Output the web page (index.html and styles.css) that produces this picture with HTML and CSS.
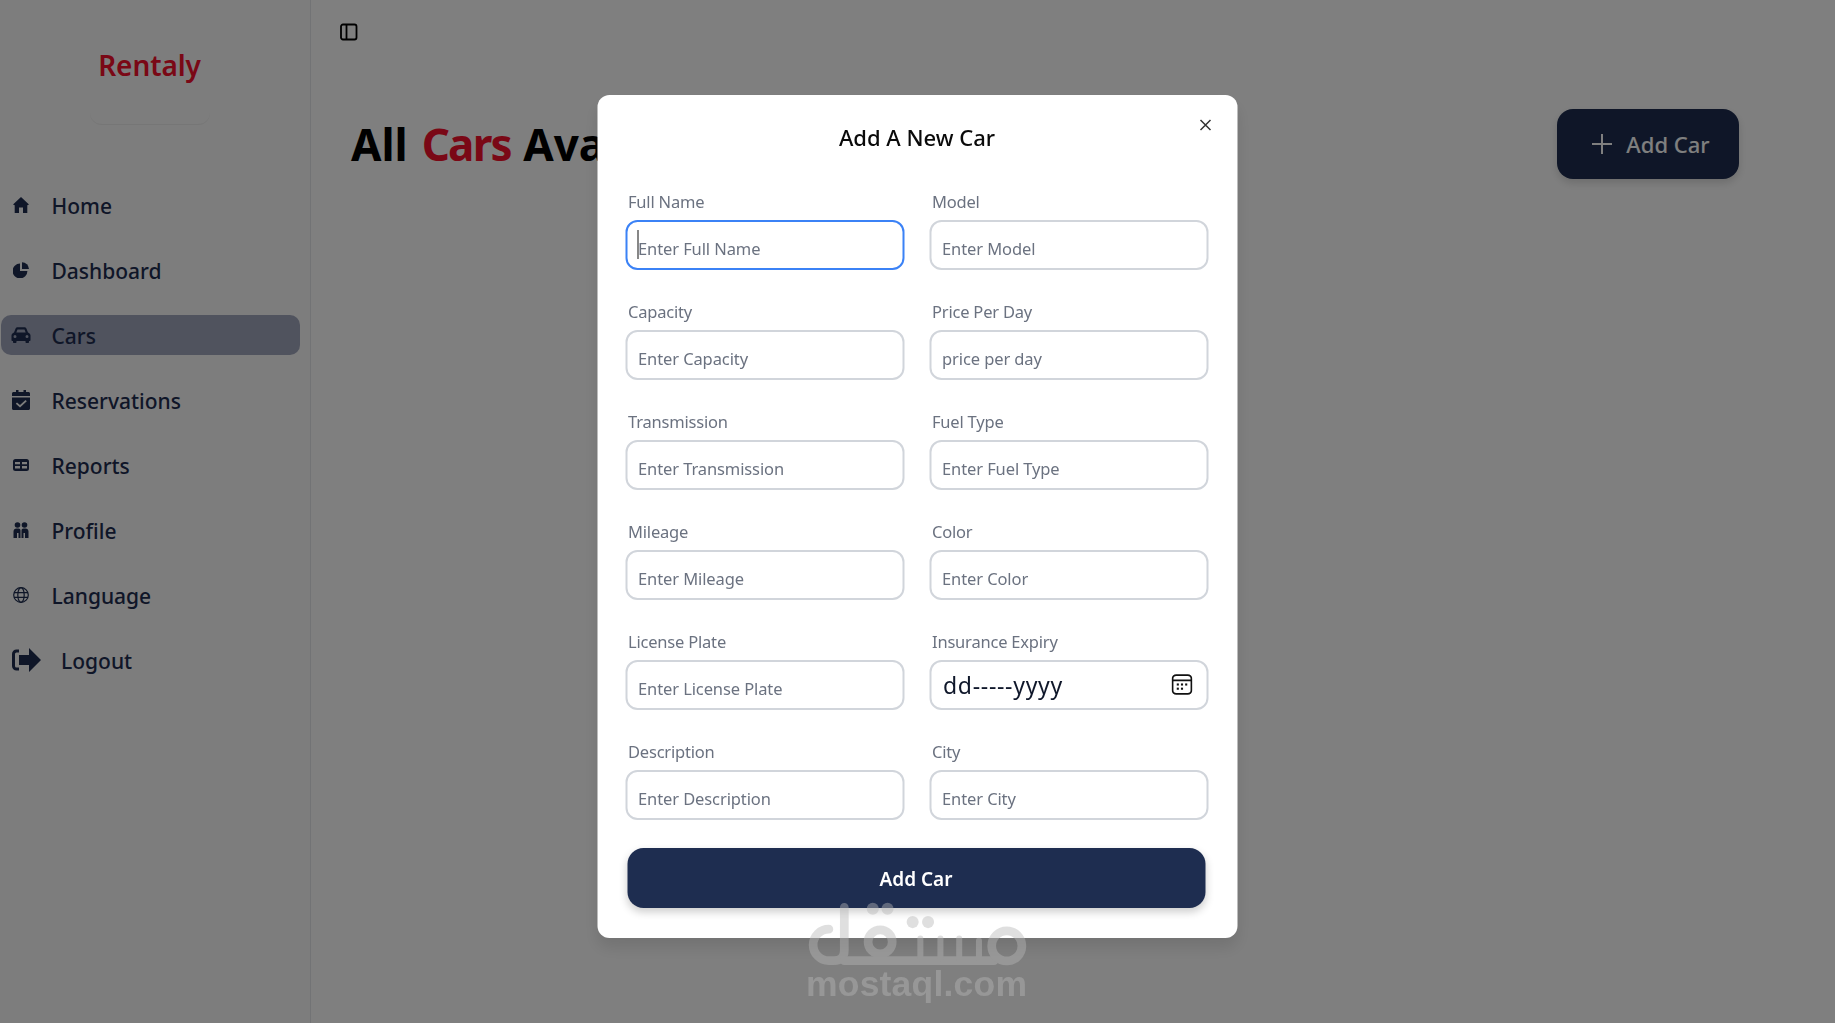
FILE: index.html
```html
<!DOCTYPE html>
<html lang="en">
<head>
<meta charset="utf-8">
<title>Rentaly - Cars</title>
<link rel="stylesheet" href="styles.css">
</head>
<body>
<div class="app">
  <aside class="sidebar">
    <div class="brand"><span class="brand-name">Rentaly</span></div>
    <nav class="nav">
      <a class="nav-item"><svg class="nav-icon" viewBox="0 0 16 16"><path d="M8 0 16 7.500 14.300 8.200V16H10V10.500H6V16H1.700V8.200L0 7.500Z"/></svg><span>Home</span></a>
      <a class="nav-item"><svg class="nav-icon" viewBox="0 0 16 16"><path d="M7 1.600V9H14.400A7.400 7.400 0 1 1 7 1.600Z"/><path d="M9 0.200A7 7 0 0 1 16 7H9Z"/></svg><span>Dashboard</span></a>
      <a class="nav-item active"><svg class="nav-icon car" viewBox="0 0 20 16"><path fill-rule="evenodd" d="M4.600 1.600C5 .7 5.800 .2 6.800 .2h6.400c1 0 1.800.5 2.200 1.400L17 5.500c1.400.5 2.500 1.500 2.500 3V13c0 .6-.4 1-1 1H18v1c0 .6-.4 1-1 1h-1.500c-.6 0-1-.4-1-1v-1h-9v1c0 .6-.4 1-1 1H3c-.6 0-1-.4-1-1v-1h-.5c-.6 0-1-.4-1-1V8.500c0-1.500 1.100-2.500 2.500-3ZM6.500 2.500 5.300 5.500h9.400l-1.200-3ZM4 8a1.500 1.500 0 1 0 0 3 1.500 1.500 0 0 0 0-3Zm12 0a1.500 1.500 0 1 0 0 3 1.500 1.500 0 0 0 0-3Z"/></svg><span>Cars</span></a>
      <a class="nav-item"><svg class="nav-icon tall" viewBox="0 0 18 20"><path fill-rule="evenodd" d="M4 0h2.500v2h5V0H14v2h2.500c.8 0 1.500.7 1.500 1.500V6H0V3.500C0 2.700.7 2 1.500 2H4ZM0 7.500h18v11c0 .8-.7 1.500-1.500 1.500h-15C.7 20 0 19.300 0 18.500ZM13.500 10 8 15 5 12.400 3.800 13.700 8 17.500 14.800 11.300Z"/></svg><span>Reservations</span></a>
      <a class="nav-item"><svg class="nav-icon" viewBox="0 0 16 16"><path fill-rule="evenodd" d="M2.500 2h11A2.500 2.500 0 0 1 16 4.500v7a2.500 2.500 0 0 1-2.500 2.500h-11A2.500 2.500 0 0 1 0 11.500v-7A2.500 2.500 0 0 1 2.500 2ZM2 5v2.200h5V5Zm7 0v2.200h5V5ZM2 9v2.500h5V9Zm7 0v2.500h5V9Z"/></svg><span>Reports</span></a>
      <a class="nav-item"><svg class="nav-icon" viewBox="0 0 16 16"><circle cx="4.500" cy="3" r="2.800"/><circle cx="11.500" cy="3" r="2.800"/><path d="M.5 16V9.500C.5 7.500 1.800 6.500 3.500 6.500H5.500C6.800 6.500 7.400 7.300 7.500 8.500V16H5.500V11H4V16ZM15.500 16V9.500C15.500 7.500 14.200 6.500 12.500 6.500H10.500C9.200 6.500 8.600 7.300 8.500 8.500V16H10.500V11H12V16Z"/></svg><span>Profile</span></a>
      <a class="nav-item"><svg class="nav-icon outline" viewBox="0 0 16 16"><circle cx="8" cy="8" r="7.300"/><ellipse cx="8" cy="8" rx="3.200" ry="7.300"/><path d="M1 5.700H15M1 10.300H15"/></svg><span>Language</span></a>
      <a class="nav-item logout"><svg class="logout-icon" viewBox="0 0 30 24"><path d="M8 3H5.500A3 3 0 0 0 2.500 6V18A3 3 0 0 0 5.500 21H8" class="logout-bracket"/><path d="M18 0 30 12 18 24V17H8V7H18Z"/></svg><span>Logout</span></a>
    </nav>
  </aside>
  <main class="main">
    <div class="topbar">
      <svg class="panel-icon" viewBox="0 0 18 18"><rect x="1" y="1.500" width="15.500" height="15" rx="2"/><path d="M6.500 1.500V16.500"/></svg>
    </div>
    <div class="page-head">
      <h1 class="page-title">All <span class="accent">Cars</span> Available</h1>
      <button class="add-btn"><svg class="plus" viewBox="0 0 20 20"><path d="M10 0V20M0 10H20"/></svg>Add Car</button>
    </div>
  </main>
</div>

<div class="overlay">
  <section class="modal">
    <button class="close" aria-label="Close"><svg viewBox="0 0 12 12"><path d="M1 1 11 11M11 1 1 11"/></svg></button>
    <h2 class="modal-title">Add A New Car</h2>
    <form class="form">
      <div class="field"><label>Full Name</label><div class="input-wrap"><input class="input focused" placeholder="Enter Full Name"><span class="caret"></span></div></div>
      <div class="field"><label>Model</label><div class="input-wrap"><input class="input" placeholder="Enter Model"></div></div>
      <div class="field"><label>Capacity</label><div class="input-wrap"><input class="input" placeholder="Enter Capacity"></div></div>
      <div class="field"><label>Price Per Day</label><div class="input-wrap"><input class="input" placeholder="price per day"></div></div>
      <div class="field"><label>Transmission</label><div class="input-wrap"><input class="input" placeholder="Enter Transmission"></div></div>
      <div class="field"><label>Fuel Type</label><div class="input-wrap"><input class="input" placeholder="Enter Fuel Type"></div></div>
      <div class="field"><label>Mileage</label><div class="input-wrap"><input class="input" placeholder="Enter Mileage"></div></div>
      <div class="field"><label>Color</label><div class="input-wrap"><input class="input" placeholder="Enter Color"></div></div>
      <div class="field"><label>License Plate</label><div class="input-wrap"><input class="input" placeholder="Enter License Plate"></div></div>
      <div class="field"><label>Insurance Expiry</label><div class="input-wrap"><input class="input date" value="dd-----yyyy"><svg class="cal" viewBox="0 0 20 20"><rect x="1" y="1" width="18" height="18" rx="3.500"/><path d="M1 6H19"/><g class="cal-dots"><rect x="5" y="9" width="2" height="2"/><rect x="9" y="9" width="2" height="2"/><rect x="13" y="9" width="2" height="2"/><rect x="5" y="13" width="2" height="2"/><rect x="9" y="13" width="2" height="2"/></g></svg></div></div>
      <div class="field"><label>Description</label><div class="input-wrap"><input class="input" placeholder="Enter Description"></div></div>
      <div class="field"><label>City</label><div class="input-wrap"><input class="input" placeholder="Enter City"></div></div>
      <button type="button" class="submit">Add Car</button>
    </form>
  </section>
</div>

<div class="watermark">
  <svg class="wm-logo" viewBox="140 210 660 200"><g class="wm-strokes"><path d="M207 297A46 46 0 0 0 207 391H222Q253 391 253 360V232"/><circle cx="360" cy="335" r="36"/><path d="M253 391H700"/><circle cx="738" cy="347" r="45"/></g><g class="wm-teeth"><path d="M480 325V385M540 325V385M596 325V385M655 332V385"/></g><g class="wm-dots"><circle cx="338" cy="236" r="18"/><circle cx="382" cy="236" r="18"/><circle cx="457" cy="276" r="18"/><circle cx="503" cy="276" r="18"/></g></svg>
  <div class="wm-text">mostaql.com</div>
</div>
</body>
</html>
```
FILE: styles.css
```css
* { box-sizing: border-box; }
html, body { margin: 0; height: 100%; overflow: hidden; }
body {
  font-family: "Noto Sans", "Open Sans", "Liberation Sans", sans-serif;
  background: #fff;
  color: #1e2d50;
}
.app { display: flex; height: 1023px; }

.sidebar {
  width: 311px;
  flex: none;
  background: #fafafa;
  border-right: 1px solid #e5e7eb;
  padding: 0 10px 0 1px;
}
.brand {
  width: 120px;
  height: 125px;
  margin: 0 auto;
  transform: translateX(-1px);
  display: flex;
  justify-content: center;
  padding-top: 43px;
  border-bottom: 1px solid #ececec;
  border-radius: 0 0 12px 12px;
}
.brand-name { font-size: 28px; font-weight: 600; letter-spacing: -.1px; color: #f5102c; line-height: 44px; }
.nav { display: flex; flex-direction: column; gap: 25px; margin-top: 60px; }
.nav-item {
  display: flex;
  align-items: center;
  height: 40px;
  padding-left: 12px;
  gap: 22.500px;
  border-radius: 10px;
  font-size: 21px;
  font-weight: 500;
  color: #1e2d50;
}
.nav-item span { padding-top: 2px; }
.nav-item.active { background: #a0a6bc; }
.nav-icon { width: 16px; height: 16px; flex: none; fill: #1e2d50; }
.nav-icon.car { width: 20px; margin-left: -2px; margin-right: -2px; }
.nav-icon.tall { width: 18px; height: 20px; margin: 0 -1px; }
.nav-icon.outline { fill: none; stroke: #1e2d50; stroke-width: 1.200; }
.logout { gap: 20px; padding-left: 10px; }
.logout-icon { width: 30px; height: 24px; fill: #1e2d50; flex: none; }
.logout-bracket { fill: none; stroke: #1e2d50; stroke-width: 3; }

.main { flex: 1; min-width: 0; padding: 0 96px 0 40px; position: relative; overflow: hidden; }
.topbar { height: 64px; display: flex; align-items: center; margin-left: -11px; }
.panel-icon { width: 18px; height: 18px; fill: none; stroke: #000; stroke-width: 1.800; }
.page-head {
  display: flex;
  justify-content: space-between;
  align-items: center;
  margin-top: 45px;
  height: 70px;
}
.page-title { margin: 0; font-size: 44px; font-weight: 700; color: #000; white-space: nowrap; letter-spacing: 0; }
.accent { color: #f5102c; letter-spacing: -1.800px; margin: 0 1px 0 2.500px; }
.add-btn {
  display: flex;
  align-items: center;
  gap: 14px;
  width: 182px;
  height: 70px;
  padding-left: 12px;
  justify-content: center;
  flex: none;
  border: 0;
  border-radius: 16px;
  background: #1e2d50;
  color: #fff;
  font: 500 22px "Noto Sans", sans-serif;
  box-shadow: 0 4px 8px rgba(0,0,0,.15);
}
.plus { width: 20px; height: 20px; fill: none; stroke: #fff; stroke-width: 2; }

.overlay {
  position: fixed;
  inset: 0;
  background: rgba(0,0,0,.5);
  display: flex;
  justify-content: center;
  padding-top: 95px;
}
.modal {
  position: relative;
  width: 640px;
  height: 843px;
  background: #fff;
  border-radius: 12px;
  padding: 26px 28px 0;
  box-shadow: 0 10px 15px rgba(0,0,0,.1);
  transform: translateX(-.5px);
}
.close {
  position: absolute;
  top: 23px;
  right: 25px;
  width: 14px;
  height: 14px;
  padding: 0;
  border: 0;
  background: none;
}
.close svg { display: block; width: 12px; height: 12px; margin: 1px; fill: none; stroke: #333; stroke-width: 1.500; }
.modal-title { margin: 0; text-align: center; font-size: 22px; font-weight: 500; line-height: 32px; color: #0a0a0a; }
.form {
  display: grid;
  grid-template-columns: 279px 279px;
  column-gap: 25px;
  row-gap: 30px;
  margin-top: 37px;
}
.field label {
  display: block;
  height: 30px;
  padding-left: 3px;
  font-size: 16.500px;
  letter-spacing: -.2px;
  line-height: 24px;
  color: #6b7280;
}
.input-wrap { position: relative; }
.input {
  display: block;
  width: 100%;
  height: 50px;
  border: 2px solid #d1d5db;
  border-radius: 12px;
  padding: 6px 10px 0 11px;
  font: 400 16.500px "Noto Sans", sans-serif;
  letter-spacing: -.1px;
  background: #fff;
  color: #1e2d50;
  outline: 0;
}
.input::placeholder { color: #6b7280; opacity: 1; }
.input.focused { border-color: #3b82f6; }
.input.date { font-size: 23px; letter-spacing: .7px; padding: 0 12px; color: #0f172a; }
.caret { position: absolute; left: 12px; top: 10px; width: 1px; height: 29px; background: #111; }
.cal { position: absolute; right: 16px; top: 14px; width: 21px; height: 21px; fill: none; stroke: #111; stroke-width: 1.700; }
.cal-dots { fill: #111; stroke: none; }
.submit {
  grid-column: 1 / -1;
  margin: -2px 3px 0 2px;
  height: 60px;
  padding-top: 2px;
  border: 0;
  border-radius: 16px;
  background: #1e2d50;
  color: #fff;
  font: 600 19px "Noto Sans", sans-serif;
  box-shadow: 0 4px 8px rgba(0,0,0,.2);
}

.watermark {
  position: fixed;
  left: 806px;
  top: 900px;
  width: 222px;
  pointer-events: none;
  opacity: .43;
  color: #b7b7b7;
}
.wm-logo { display: block; width: 222px; height: 67px; }
.wm-strokes { fill: none; stroke: #b7b7b7; stroke-width: 26; stroke-linecap: round; }
.wm-teeth { fill: none; stroke: #b7b7b7; stroke-width: 18; stroke-linecap: round; }
.wm-dots { fill: #b7b7b7; }
.wm-text {
  margin-top: -2px;
  font: 700 35.500px/38px "Liberation Sans", sans-serif;
  letter-spacing: .2px;
  white-space: nowrap;
}
```
